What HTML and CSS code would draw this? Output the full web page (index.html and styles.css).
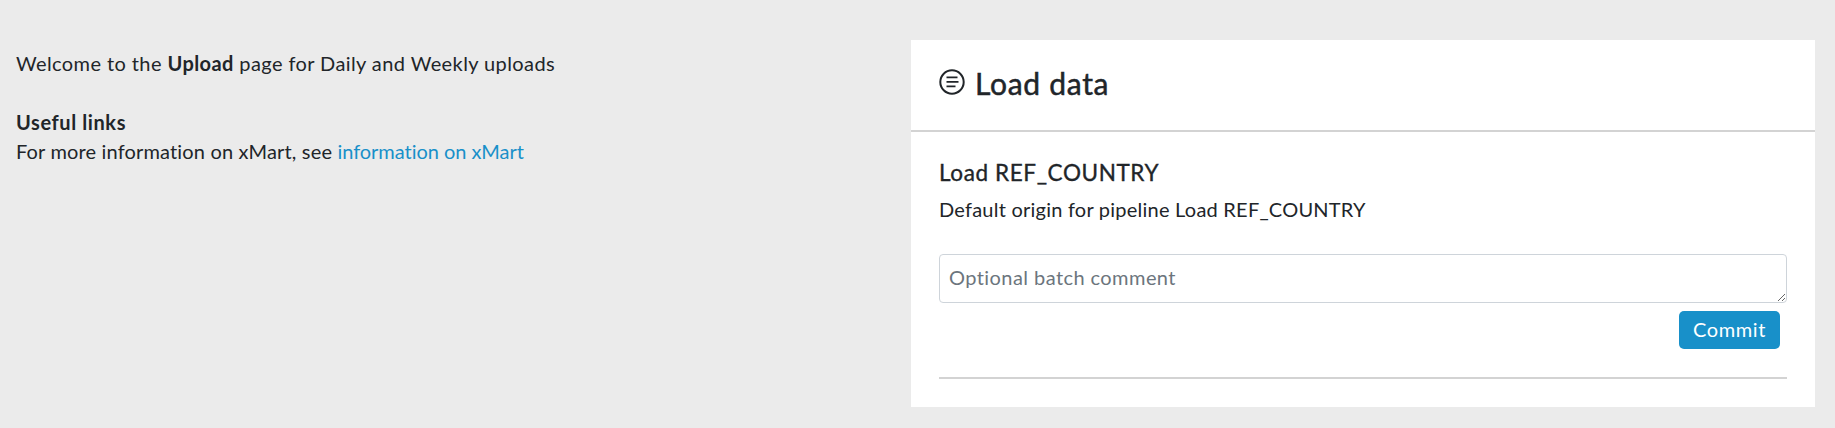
FILE: index.html
```html
<!DOCTYPE html>
<html lang="en">
<head>
<meta charset="utf-8">
<title>Upload</title>
<link rel="stylesheet" href="styles.css">
</head>
<body>
<main class="page">
  <section class="intro">
    <p class="welcome">Welcome to the <strong>Upload</strong> page for Daily and Weekly uploads</p>
    <p class="links"><strong>Useful links</strong><br>For more information on xMart, see <a href="#">information on xMart</a></p>
  </section>
  <section class="card">
    <header class="card-head">
      <svg class="head-icon" viewBox="0 0 26 26" aria-hidden="true">
        <circle cx="13" cy="13" r="11.7" fill="none" stroke="#212529" stroke-width="2"/>
        <path d="M7.5 8.4h11M7.5 12.9h12M7.5 17.4h9" fill="none" stroke="#212529" stroke-width="1.7"/>
      </svg>
      <h1>Load data</h1>
    </header>
    <div class="card-body">
      <h2>Load REF_COUNTRY</h2>
      <p class="origin">Default origin for pipeline Load REF_COUNTRY</p>
      <textarea class="comment" placeholder="Optional batch comment"></textarea>
      <div class="actions"><button class="commit" type="button">Commit</button></div>
      <hr class="rule">
    </div>
  </section>
</main>
</body>
</html>
```
FILE: styles.css
```css
* { box-sizing: border-box; }
html, body { margin: 0; height: 100%; }
body {
  background: #ebebeb;
  color: #212529;
  font-family: "Lato", "Liberation Sans", sans-serif;
  font-size: 20px;
  line-height: 28.8px;
}
.page {
  display: flex;
  align-items: flex-start;
  gap: 20px;
  padding: 40px 20px 0 16px;
}
.intro { flex: 0 0 875px; padding-top: 9px; }
.intro p { margin: 0 0 30px; }
.welcome { letter-spacing: 0.41px; }
.links { letter-spacing: 0.16px; }
.intro strong { font-weight: 700; }
.links strong { letter-spacing: 0.6px; }
.intro a { color: #1890c9; text-decoration: none; letter-spacing: -0.03px; }
.card { flex: 1; background: #fff; height: 367px; }
.card-head {
  display: flex;
  align-items: center;
  gap: 10px;
  height: 92px;
  padding: 0 28px;
  border-bottom: 2px solid #d3d3d3;
}
.head-icon { width: 26px; height: 26px; margin-top: -7px; }
h1 {
  margin: -4px 0 0;
  font-size: 30px;
  line-height: 34px;
  font-weight: 400;
  letter-spacing: 0.7px;
  -webkit-text-stroke: 0.5px #212529;
}
.card-body { padding: 28px 28px 0; }
h2 {
  margin: 0;
  font-size: 22.5px;
  line-height: 26px;
  font-weight: 400;
  letter-spacing: 0.6px;
  -webkit-text-stroke: 0.35px #212529;
}
.origin { margin: 9px 0 0; letter-spacing: 0.23px; }
.comment {
  display: block;
  width: 100%;
  height: 49px;
  margin-top: 30px;
  padding: 8px 9px;
  border: 1px solid #ced4da;
  border-radius: 4px;
  background: #fff;
  font: inherit;
  letter-spacing: 0.43px;
  color: #212529;
}
.comment::placeholder { color: #6c757d; opacity: 1; }
.actions { display: flex; justify-content: flex-end; padding: 8px 7px 0 0; }
.commit {
  width: 101px;
  height: 38px;
  border: 0;
  border-radius: 5px;
  background: #1890c9;
  color: #fff;
  font: inherit;
  letter-spacing: 0.6px;
}
.rule { margin: 28px 0 0; border: 0; border-top: 2px solid #d3d3d3; }
```
